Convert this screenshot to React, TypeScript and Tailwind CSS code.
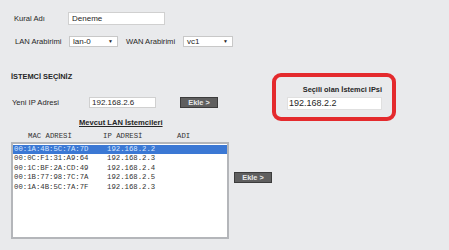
import React from "react";

const rows = [
  ["00:1A:4B:5C:7A:7D", "192.168.2.2"],
  ["00:0C:F1:31:A9:64", "192.168.2.3"],
  ["00:1C:BF:2A:CD:49", "192.168.2.4"],
  ["00:1B:77:98:7C:7A", "192.168.2.5"],
  ["00:1A:4B:5C:7A:7F", "192.168.2.3"],
];

function Select({ value, w }: { value: string; w: string }) {
  return (
    <div className={`${w} h-[11px] bg-white border border-[#c8c8c8] flex items-center justify-between pl-[3px] pr-[4px] text-[8px]`}>
      <span>{value}</span>
      <span className="text-[5px] leading-none">▼</span>
    </div>
  );
}

function Button({ label }: { label: string }) {
  return (
    <div className="w-[38px] h-[11px] bg-[#5f5f5f] border border-[#3c3c3c] text-[#e8e8e8] font-bold flex items-center justify-center text-[7.4px]">
      {label}
    </div>
  );
}

export default function App() {
  return (
    <div
      className="relative w-[449px] h-[250px] bg-[#e9eaec] overflow-hidden text-[#262626] text-[7.6px] leading-none"
      style={{ fontFamily: '"Liberation Sans", Arial, sans-serif' }}
    >
      <div className="flex items-center h-[13px] mt-[12px] pl-[14px]">
        <span className="w-[54px]">Kural Adı</span>
        <div className="w-[97px] h-[13px] bg-white border border-[#d0d0d0] flex items-center pl-[3px] text-[8px]">Deneme</div>
      </div>
      <div className="flex items-center h-[11px] mt-[11px] pl-[15px]">
        <span className="w-[54px]">LAN Arabirimi</span>
        <Select value="lan-0" w="w-[49px]" />
        <span className="w-[57px] ml-[8px]">WAN Arabirimi</span>
        <Select value="vc1" w="w-[50px]" />
      </div>

      <div className="mt-[25px] pl-[11px] h-[10px] flex items-center font-bold text-[7.4px]">İSTEMCİ SEÇİNİZ</div>

      <div className="flex items-center h-[11px] mt-[15px] pl-[12px]">
        <span className="w-[77px]">Yeni IP Adresi</span>
        <div className="w-[67px] h-[11px] bg-white border border-[#d0d0d0] flex items-center pl-[2px] text-[8px]">192.168.2.6</div>
        <div className="ml-[24px]">
          <Button label="Ekle >" />
        </div>
      </div>

      <div className="mt-[10px] h-[10px] flex items-center pl-[79px] font-bold underline">Mevcut LAN İstemcileri</div>

      <div
        className="mt-[4px] h-[10px] flex items-center text-[7.3px] text-[#333] pl-[28px]"
        style={{ fontFamily: '"Liberation Mono", "Courier New", monospace' }}
      >
        <span className="w-[75px]">MAC ADRESİ</span>
        <span className="w-[74px]">IP ADRESİ</span>
        <span>ADI</span>
      </div>

      <div className="flex pl-[11px]">
        <div
          className="w-[218px] h-[97px] bg-white border-2 border-[#b4b6ba] pt-px text-[7.3px] text-[#333]"
          style={{ fontFamily: '"Liberation Mono", "Courier New", monospace' }}
        >
          {rows.map(([mac, ip], i) => (
            <div
              key={i}
              className={`flex items-center h-[9.4px] pl-px ${i === 0 ? "bg-[#3b78d4] text-[#d6e6ff]" : ""}`}
            >
              <span className="w-[93px]">{mac}</span>
              <span>{ip}</span>
            </div>
          ))}
        </div>
        <div className="ml-[5px] mt-[30px]">
          <Button label="Ekle >" />
        </div>
      </div>

      <div className="absolute left-[272px] top-[73px] w-[124px] h-[48px] border-4 border-[#e42a2d] rounded-[9px] flex flex-col items-end pr-[10px] pt-[9px]">
        <span className="font-bold text-[7.4px]">Seçili olan İstemci IPsi</span>
        <div className="mt-[4px] w-[95px] h-[13px] bg-white border border-[#e0e0e0] flex items-center pl-[1px] text-[9px]">
          192.168.2.2
        </div>
      </div>
    </div>
  );
}
